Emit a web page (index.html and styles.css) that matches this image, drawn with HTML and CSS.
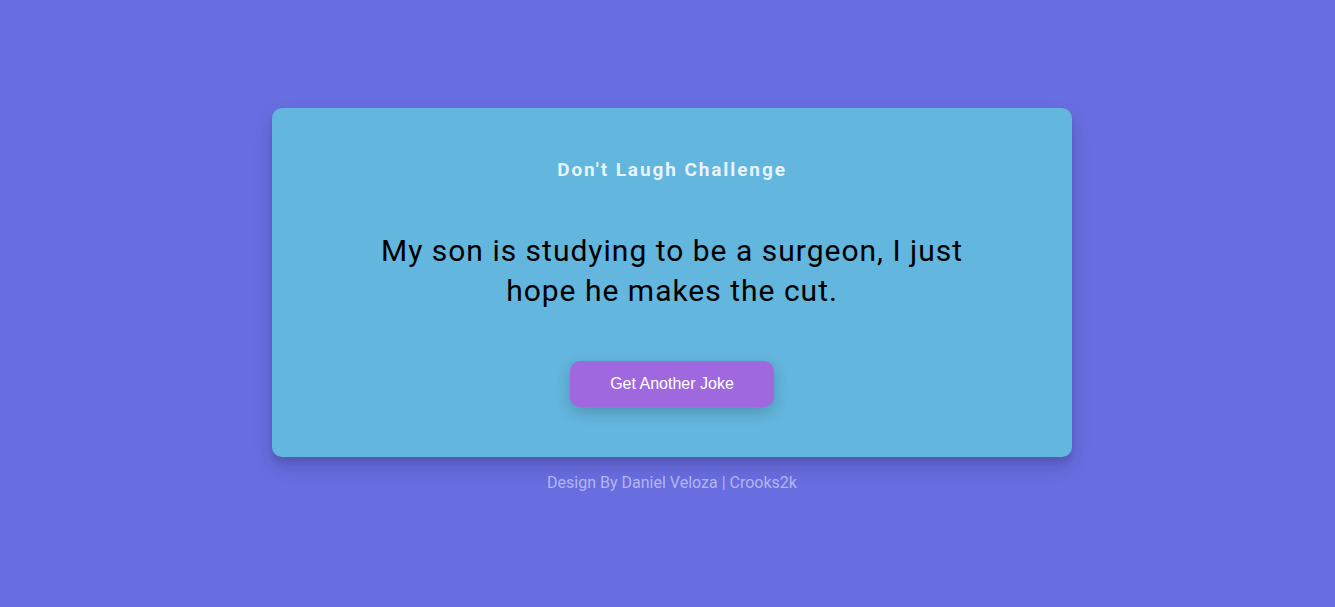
FILE: index.html
```html
<!DOCTYPE html>
<html>
<head>
<meta charset="utf-8">
<link rel="stylesheet" href="styles.css">
</head>
<body>
<main class="page">
  <section class="card">
    <h3 class="title">Don't Laugh Challenge</h3>
    <p class="joke">My son is studying to be a surgeon, I just hope he makes the cut.</p>
    <button class="btn">Get Another Joke</button>
  </section>
  <p class="footer">Design By Daniel Veloza | Crooks2k</p>
</main>
</body>
</html>
```
FILE: styles.css
```css
* { box-sizing: border-box; }
html, body { margin: 0; padding: 0; }
body {
  background: #686de0;
  font-family: Roboto, "Noto Sans", sans-serif;
}
.page {
  min-height: 100vh;
  display: flex;
  flex-direction: column;
  align-items: center;
  justify-content: center;
  padding: 0 0 8px 9px;
}
.card {
  width: 800px;
  background: #63b6de;
  border-radius: 10px;
  box-shadow: 0 10px 20px rgba(0, 0, 0, 0.12), 0 6px 6px rgba(0, 0, 0, 0.1);
  padding: 50px 20px;
  display: flex;
  flex-direction: column;
  align-items: center;
  gap: 50px;
  text-align: center;
}
.title {
  margin: 0;
  font-size: 19px;
  line-height: 23px;
  font-weight: 700;
  letter-spacing: 1.9px;
  color: #e8f4fb;
}
.joke {
  margin: 0;
  max-width: 640px;
  font-size: 30px;
  line-height: 40px;
  letter-spacing: 1px;
  color: #000;
}
.btn {
  width: 204px;
  height: 46px;
  border: none;
  border-radius: 10px;
  background: #9f68de;
  color: #fff;
  font-family: "Liberation Sans", Arial, sans-serif;
  font-size: 16px;
  box-shadow: 0 5px 15px rgba(0, 0, 0, 0.2);
  cursor: pointer;
}
.footer {
  margin: 16px 0 0;
  font-size: 16px;
  line-height: 19px;
  color: #b3b6f1;
}
```
